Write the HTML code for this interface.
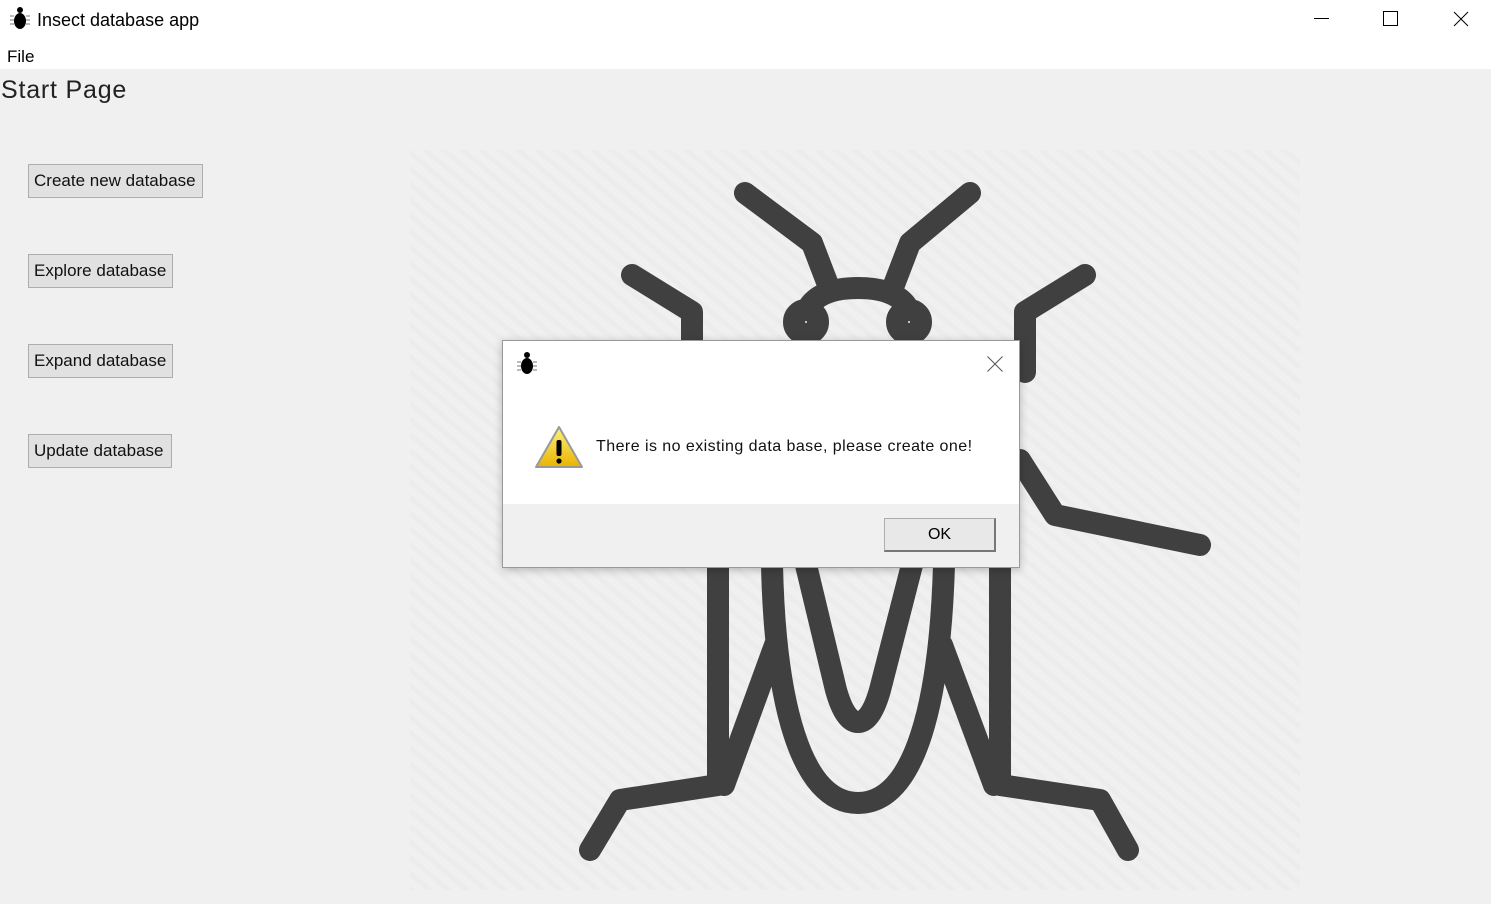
<!DOCTYPE html>
<html><head><style>
body{margin:0;width:1491px;height:904px;overflow:hidden;background:#f0f0f0;font-family:"Liberation Sans",sans-serif;position:relative}
.top{position:absolute;left:0;top:0;width:1491px;height:69px;background:#fff}
.t{position:absolute;color:#000}
.btn{position:absolute;left:28px;height:34px;box-sizing:border-box;border:1px solid #adadad;background:#e1e1e1;font-size:17px;line-height:32px;padding:0 5px;color:#111}
.dlg{position:absolute;left:502px;top:340px;width:518px;height:228px;box-sizing:border-box;border:1px solid #999;background:#fff;box-shadow:0 2px 8px rgba(0,0,0,.25)}
.foot{position:absolute;left:0;bottom:0;width:100%;height:63px;background:#f0f0f0}
.ok{position:absolute;left:381px;top:14px;width:112px;height:34px;box-sizing:border-box;border:1px solid #adadad;border-right:2px solid #777;border-bottom:2px solid #777;background:#e8e8e8;text-align:center;line-height:32px;font-size:16px}
</style></head><body>
<div class="top"></div>
<svg style="position:absolute;left:8px;top:6px" width="26" height="26" viewBox="0 0 26 26"><circle cx="12" cy="4" r="3"/><ellipse cx="12" cy="15" rx="6" ry="8"/><path d="M2 10h4M2 14h4M2 18h4M18 10h4M18 14h4M18 18h4" stroke="#777" stroke-width="1"/></svg>
<div class="t" style="left:37px;top:10px;font-size:18px">Insect database app</div>
<div class="t" style="left:7px;top:47px;font-size:17px">File</div>
<svg style="position:absolute;left:1300px;top:0" width="191" height="40"><path d="M14 18.5h15" stroke="#000"/><rect x="83.5" y="11.5" width="14" height="14" fill="none" stroke="#000"/><path d="M154 12l14 14M168 12l-14 14" stroke="#000"/></svg>
<div class="t" style="left:1px;top:76px;font-size:25px;letter-spacing:0.8px;color:#222">Start Page</div>
<div class="btn" style="top:164px;width:175px">Create new database</div>
<div class="btn" style="top:254px;width:145px">Explore database</div>
<div class="btn" style="top:344px;width:145px">Expand database</div>
<div class="btn" style="top:434px;width:144px">Update database</div>
<svg style="position:absolute;left:0;top:0" width="1491" height="904">
<defs><pattern id="h" width="12" height="12" patternUnits="userSpaceOnUse" patternTransform="rotate(-50)"><rect width="12" height="12" fill="#f0f0f0"/><rect width="5" height="12" fill="#ececec"/></pattern></defs>
<rect x="410" y="150" width="890" height="740" fill="url(#h)"/>
<g fill="none" stroke="#404040" stroke-width="22" stroke-linecap="round" stroke-linejoin="round">
<path d="M745 193L812 243L830 290M970 193L910 243L892 290"/>
<path d="M810 305C820 292 838 288 858 288C878 288 896 292 906 305"/>
<circle cx="806" cy="322" r="12"/><circle cx="909" cy="322" r="12"/>
<path d="M632 275L692 312L692 345M1085 275L1025 312L1025 372"/>
<path d="M1020 460L1055 515L1200 545"/>
<path d="M718 565V785L620 800L590 850M1000 565V785L1100 800L1128 850"/>
<path d="M772 565C775 700 800 803 858 803C916 803 940 700 944 565"/>
<path d="M724 785L775 645M994 785L942 645"/>
<path d="M806 565L836 690Q845 722 858 722Q871 722 880 690L912 565"/>
</g></svg>
<div class="dlg">
<svg style="position:absolute;left:12px;top:10px" width="26" height="26" viewBox="0 0 26 26"><circle cx="12" cy="4" r="3"/><ellipse cx="12" cy="15" rx="6" ry="8"/><path d="M2 11h4M2 15h4M2 19h4M18 11h4M18 15h4M18 19h4" stroke="#777" stroke-width="1"/></svg>
<svg style="position:absolute;left:484px;top:15px" width="16" height="16"><path d="M0.5 0.5l15 15M15.5 0.5l-15 15" stroke="#555"/></svg>
<svg style="position:absolute;left:32px;top:84px" width="50" height="46"><defs><linearGradient id="g" x1="0" y1="0" x2="0" y2="1"><stop offset="0" stop-color="#fff27a"/><stop offset="1" stop-color="#e8b400"/></linearGradient></defs><path d="M24 2L47 42H1Z" fill="url(#g)" stroke="#999" stroke-width="2" stroke-linejoin="round"/><rect x="21.5" y="15" width="5" height="16" rx="2"/><circle cx="24" cy="36" r="2.6"/></svg>
<div class="t" style="left:93px;top:97px;font-size:16px;letter-spacing:0.45px;color:#111">There is no existing data base, please create one!</div>
<div class="foot"><div class="ok">OK</div></div>
</div>
</body></html>
